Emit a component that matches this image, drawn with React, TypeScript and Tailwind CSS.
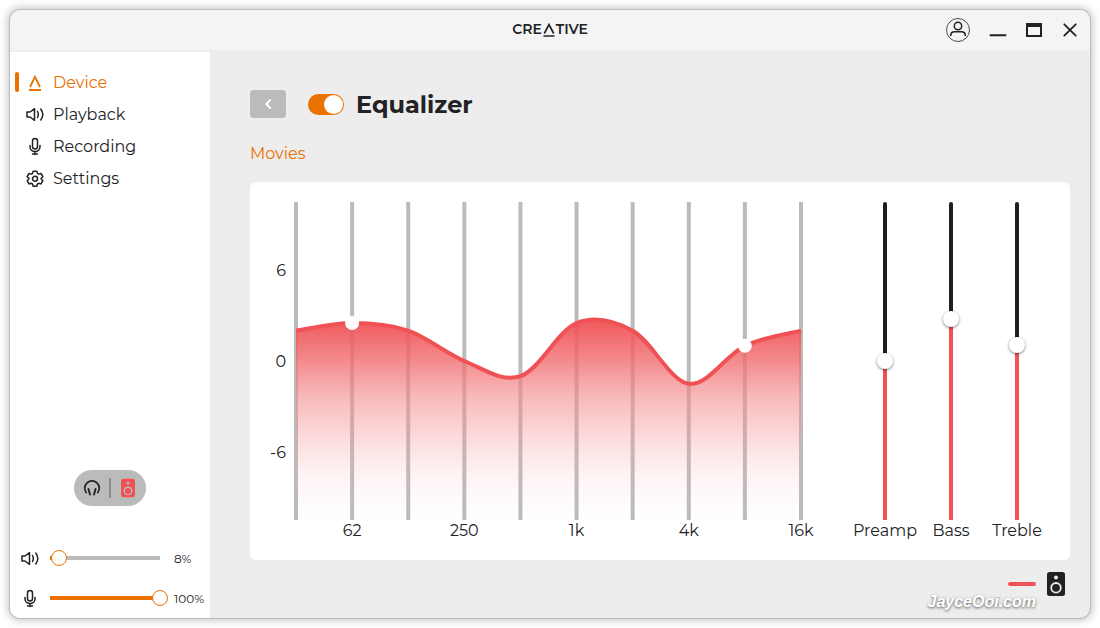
import React from 'react'

const BANDS = [
  { label: '', gain: 2 },
  { label: '62', gain: 2.5, handle: true },
  { label: '', gain: 2 },
  { label: '250', gain: 0 },
  { label: '', gain: -1 },
  { label: '1k', gain: 2.5 },
  { label: '', gain: 2 },
  { label: '4k', gain: -1.5 },
  { label: '', gain: 1, handle: true },
  { label: '16k', gain: 2 },
]

const NAV_ITEMS = [
  { label: 'Device', icon: DeviceIcon, active: true },
  { label: 'Playback', icon: VolumeIcon },
  { label: 'Recording', icon: MicIcon },
  { label: 'Settings', icon: GearIcon },
]

// plot area units: 509 x 318, 0 dB in the middle
const points = BANDS.map((band, i) => ({
  x: 2 + (i * 505) / 9,
  y: 159 - band.gain * 15.17,
}))

function curvePath() {
  let d = `M${points[0].x} ${points[0].y}`
  for (let i = 0; i < points.length - 1; i++) {
    const prev = points[i - 1] || points[i]
    const cur = points[i]
    const next = points[i + 1]
    const after = points[i + 2] || next
    d += ` C${cur.x + (next.x - prev.x) / 6} ${cur.y + (next.y - prev.y) / 6}`
    d += ` ${next.x - (after.x - cur.x) / 6} ${next.y - (after.y - cur.y) / 6}`
    d += ` ${next.x} ${next.y}`
  }
  return d
}

function App() {
  return (
    <div className="flex min-h-screen bg-white p-2.5 font-[Montserrat,Inter,sans-serif] text-[#222224]">
      <div className="flex w-full flex-col overflow-hidden rounded-[10px] bg-[#ededed] shadow-[0_0_0_1px_#bdbdbd,0_0_8px_2px_rgba(0,0,0,0.25)]">
        <TitleBar />
        <div className="flex flex-1">
          <Sidebar />
          <Equalizer />
        </div>
      </div>
    </div>
  )
}

function TitleBar() {
  return (
    <header className="grid h-10 grid-cols-[1fr_auto_1fr] items-center bg-[#f4f4f4] px-2">
      <div />
      <Logo />
      <div className="flex items-center justify-end gap-3">
        <button type="button" aria-label="Account" className="mr-1">
          <svg className="h-6 w-6" viewBox="0 0 24 24" fill="none" stroke="currentColor">
            <circle cx="12" cy="12" r="11.5" strokeWidth="0.8" />
            <circle cx="12" cy="8" r="3.7" strokeWidth="1.5" />
            <path d="M4.8 18v-.8c0-2.4 1.7-3.4 3.7-3.4h7c2 0 3.7 1 3.7 3.4v.8" strokeWidth="1.5" />
          </svg>
        </button>
        <button type="button" aria-label="Minimize">
          <svg className="h-6 w-6" viewBox="0 0 24 24" fill="none" stroke="currentColor">
            <path d="M4.5 17.3h15" strokeWidth="2" strokeLinecap="round" />
          </svg>
        </button>
        <button type="button" aria-label="Maximize">
          <svg className="h-6 w-6" viewBox="0 0 24 24" fill="none" stroke="currentColor">
            <rect x="5" y="6" width="14" height="12" strokeWidth="2" />
            <path d="M4 7h16" strokeWidth="4" />
          </svg>
        </button>
        <button type="button" aria-label="Close">
          <svg className="h-6 w-6" viewBox="0 0 24 24" fill="none" stroke="currentColor">
            <path d="M6.3 6.3l11.4 11.4M17.7 6.3L6.3 17.7" strokeWidth="1.8" strokeLinecap="round" />
          </svg>
        </button>
      </div>
    </header>
  )
}

function Logo() {
  return (
    <div className="flex items-center pb-0.5 text-sm leading-4 font-semibold">
      CRE
      <svg className="h-4 w-3.5" viewBox="0 0 14 16" fill="none" stroke="currentColor" strokeWidth="1.700" role="img" aria-label="A">
        <path d="M2.300 12.500L7 3.500l4.700 9M1.500 15h11" />
      </svg>
      TIVE
    </div>
  )
}

function Sidebar() {
  return (
    <aside className="flex w-[200px] shrink-0 flex-col justify-between border-t-2 border-[#efefef] bg-white">
      <nav className="pt-3.5">
        {NAV_ITEMS.map(({ label, icon: Icon, active }) => (
          <a
            key={label}
            href="#"
            className={`${active ? 'text-[#eb7100]' : ''} flex h-8 items-center pl-[5px] text-base`}
          >
            <span className={`${active ? 'bg-[#eb7100]' : ''} h-5 w-1 rounded-full`} />
            <Icon className="mr-2 ml-1.5 h-5 w-5" />
            <span className="pt-0.5">{label}</span>
          </a>
        ))}
      </nav>

      <div>
        <div className="mb-8 flex justify-center">
          <div className="flex h-9 w-18 items-center justify-between rounded-full bg-[#bbbbbb] px-2">
            <button type="button" aria-label="Headphones">
              <HeadphonesIcon />
            </button>
            <span className="h-5 w-0.5 bg-[#8c8c8c]" />
            <button type="button" aria-label="Speakers" className="text-[#f05154]">
              <SpeakerIcon className="h-5 w-5" hole="#bbbbbb" />
            </button>
          </div>
        </div>
        <VolumeRow name="Speaker volume" icon={VolumeIcon} initial={8} />
        <VolumeRow name="Microphone volume" icon={MicIcon} initial={100} />
      </div>
    </aside>
  )
}

interface VolumeRowProps {
  name: string
  icon: React.FC<IconProps>
  initial: number
}

const VolumeRow: React.FC<VolumeRowProps> = ({ name, icon: Icon, initial }) => {
  const [value, setValue] = React.useState(initial)

  return (
    <label className="flex h-10 items-center pl-2.5">
      <Icon className="h-5 w-5 shrink-0" />
      <input
        type="range"
        aria-label={name}
        min={0}
        max={100}
        value={value}
        onChange={(e) => setValue(Number(e.target.value))}
        style={{ '--fill': `${value}%` } as React.CSSProperties}
        className="ml-0.5 h-4 w-[126px] appearance-none bg-[linear-gradient(to_right,#eb7100_var(--fill),#bbbbbb_var(--fill))] bg-[size:calc(100%-16px)_4px] bg-center bg-no-repeat [&::-webkit-slider-thumb]:h-4 [&::-webkit-slider-thumb]:w-4 [&::-webkit-slider-thumb]:appearance-none [&::-webkit-slider-thumb]:rounded-full [&::-webkit-slider-thumb]:border [&::-webkit-slider-thumb]:border-[#eb7100] [&::-webkit-slider-thumb]:bg-white"
      />
      <span className="ml-1.5 pt-0.5 text-xs">{value}%</span>
    </label>
  )
}

function Equalizer() {
  return (
    <main className="flex-1 pt-10 pr-5 pl-10">
      <div className="flex h-7 items-center">
        <button type="button" aria-label="Back" className="flex h-7 w-9 items-center justify-center rounded bg-[#bbbbbb] text-white">
          <svg className="h-3 w-3" viewBox="0 0 12 12" fill="none" stroke="currentColor" strokeWidth="1.8">
            <path d="M8.200 2L4.300 6l3.900 4" strokeLinecap="round" strokeLinejoin="round" />
          </svg>
        </button>
        <input
          id="eq-enabled"
          type="checkbox"
          role="switch"
          defaultChecked
          className="ml-[22px] flex h-[21px] w-9 appearance-none items-center rounded-full bg-[#bbbbbb] px-px before:h-[19px] before:w-[19px] before:rounded-full before:bg-white checked:justify-end checked:bg-[#eb7100]"
        />
        <label htmlFor="eq-enabled" className="ml-3 pt-0.5 text-2xl leading-7 font-bold">
          <h1>Equalizer</h1>
        </label>
      </div>
      <button type="button" className="mt-6 block h-6 text-base leading-6 text-[#eb7100]">Movies</button>

      <section className="mt-4 flex rounded-md bg-white pt-5 pr-5 pb-[18px]">
        <div className="flex flex-1">
          <div className="mb-[22px] flex w-11 flex-col justify-between pt-[58px] pb-14 pr-2 text-right text-base leading-[22px]">
            <span>6</span>
            <span>0</span>
            <span>-6</span>
          </div>
          <div className="flex-1">
            <Curve />
            <div className="-mx-[26px] grid grid-cols-10 text-center text-base leading-[22px]">
              {BANDS.map((band, i) => (
                <span key={i}>{band.label}</span>
              ))}
            </div>
          </div>
        </div>
        <div className="ml-[49px] flex">
          <ToneSlider label="Preamp" initial={0} />
          <ToneSlider label="Bass" initial={3.3} />
          <ToneSlider label="Treble" initial={1.3} />
        </div>
      </section>

      <footer className="relative mt-3 flex items-center justify-end gap-2 pr-0.5">
        <span className="h-1 w-7 rounded-full bg-[#f05154]" />
        <SpeakerIcon className="h-6 w-6" hole="#ededed" large />
        <span className="absolute top-5 right-[34px] font-['Liberation_Sans'] text-base leading-5 font-bold text-white italic [text-shadow:0_1px_3px_#555]">
          JayceOoi.com
        </span>
      </footer>
    </main>
  )
}

function Curve() {
  const line = curvePath()

  return (
    <svg className="block h-auto w-full" viewBox="0 0 509 318" role="img" aria-label="Equalizer curve">
      <defs>
        <linearGradient id="curve-fill" gradientUnits="userSpaceOnUse" x1="0" y1="119" x2="0" y2="318">
          <stop offset="0" stopColor="#ef5053" stopOpacity="0.95" />
          <stop offset="0.2" stopColor="#f16d70" stopOpacity="0.8" />
          <stop offset="0.4" stopColor="#f48c8e" stopOpacity="0.58" />
          <stop offset="0.6" stopColor="#f69497" stopOpacity="0.32" />
          <stop offset="0.8" stopColor="#f7acb0" stopOpacity="0.12" />
          <stop offset="1" stopColor="#f7acb0" stopOpacity="0" />
        </linearGradient>
      </defs>
      {points.map((p) => (
        <path key={p.x} d={`M${p.x} 0V318`} stroke="#bbbbbb" strokeWidth="4" />
      ))}
      <path d={`${line} V318 H2 Z`} fill="url(#curve-fill)" />
      <path d={line} fill="none" stroke="#f05154" strokeWidth="4" />
      {points.map((p, i) => BANDS[i].handle && (
        <circle key={p.x} cx={p.x} cy={p.y} r="7" fill="#fff" />
      ))}
    </svg>
  )
}

function ToneSlider({ label, initial }: { label: string, initial: number }) {
  const [value, setValue] = React.useState(initial)
  const fill = ((value + 12) / 24) * 100

  return (
    <label className="flex w-[66px] flex-col items-center text-base leading-[22px] whitespace-nowrap">
      <input
        type="range"
        min={-12}
        max={12}
        step={0.1}
        value={value}
        onChange={(e) => setValue(Number(e.target.value))}
        style={{ '--fill': `${fill}%` } as React.CSSProperties}
        className="w-1 flex-1 appearance-none rounded-t-full bg-[linear-gradient(to_top,#f05154_var(--fill),#1f1f20_var(--fill))] [direction:rtl] [writing-mode:vertical-lr] [&::-webkit-slider-runnable-track]:w-1 [&::-webkit-slider-thumb]:-ml-1.5 [&::-webkit-slider-thumb]:h-4 [&::-webkit-slider-thumb]:w-4 [&::-webkit-slider-thumb]:appearance-none [&::-webkit-slider-thumb]:rounded-full [&::-webkit-slider-thumb]:bg-white [&::-webkit-slider-thumb]:shadow-[0_1px_3px_rgba(0,0,0,0.5)]"
      />
      {label}
    </label>
  )
}

interface IconProps {
  className?: string
}

function DeviceIcon({ className }: IconProps) {
  return (
    <svg className={className} viewBox="0 0 20 20" fill="none" stroke="currentColor" strokeWidth="1.800">
      <path d="M5 15L10 4.800 15 15M4 18h12" />
    </svg>
  )
}

function VolumeIcon({ className }: IconProps) {
  return (
    <svg className={className} viewBox="0 0 20 20" fill="none" stroke="currentColor" strokeWidth="1.5">
      <path d="M2 8h3l4.500-3.300v11.600L5 13H2z" strokeLinejoin="round" />
      <path d="M12.500 7.500c1 1.800 1 4.200 0 6M15.800 5c2.400 3.300 2.400 7.700 0 11" strokeLinecap="round" />
    </svg>
  )
}

function MicIcon({ className }: IconProps) {
  return (
    <svg className={className} viewBox="0 0 20 20" fill="none" stroke="currentColor" strokeWidth="1.5">
      <rect x="7.500" y="2.500" width="5" height="10.500" rx="2.500" />
      <path d="M5 9.500v1.300a5 4.700 0 0 0 10 0V9.500M10 15.500v3M7.500 18h5" strokeLinecap="round" />
    </svg>
  )
}

function GearIcon({ className }: IconProps) {
  return (
    <svg className={className} viewBox="-2 -2.500 28 28" fill="none" stroke="currentColor" strokeWidth="2.100" strokeLinejoin="round">
      <circle cx="12" cy="12.500" r="3.500" />
      <path d="M9.400 1.900h5.200l.8 3.200 1.800 1 3.200-.9 2.600 4.500-2.400 2.300v1l2.400 2.300-2.600 4.500-3.200-.9-1.800 1-.8 3.200H9.400l-.8-3.200-1.800-1-3.200.9L1 15.300 3.400 13v-1L1 9.700l2.600-4.500 3.200.9 1.800-1z" />
    </svg>
  )
}

function HeadphonesIcon() {
  return (
    <svg className="h-5 w-5" viewBox="0 0 20 20" fill="none" stroke="currentColor" strokeWidth="1.700" strokeLinecap="round">
      <path d="M4.200 14.600A7.300 7.300 0 1 1 15.800 14.600" />
      <path d="M6.400 11l1.600 5.500M13.600 11L12 16.500" strokeWidth="1.900" />
    </svg>
  )
}

function SpeakerIcon({ className, hole, large }: { className: string, hole: string, large?: boolean }) {
  return (
    <svg className={className} viewBox={large ? '0 0 24 24' : '-1 -1 26 26'}>
      <rect x="3" y="0" width="18" height="24" rx="2.500" fill="currentColor" />
      <circle cx="12" cy="5.500" r="2" fill={hole} />
      <circle cx="12" cy="15.800" r="4.800" fill="none" stroke={hole} strokeWidth="1.800" />
    </svg>
  )
}

export default App
